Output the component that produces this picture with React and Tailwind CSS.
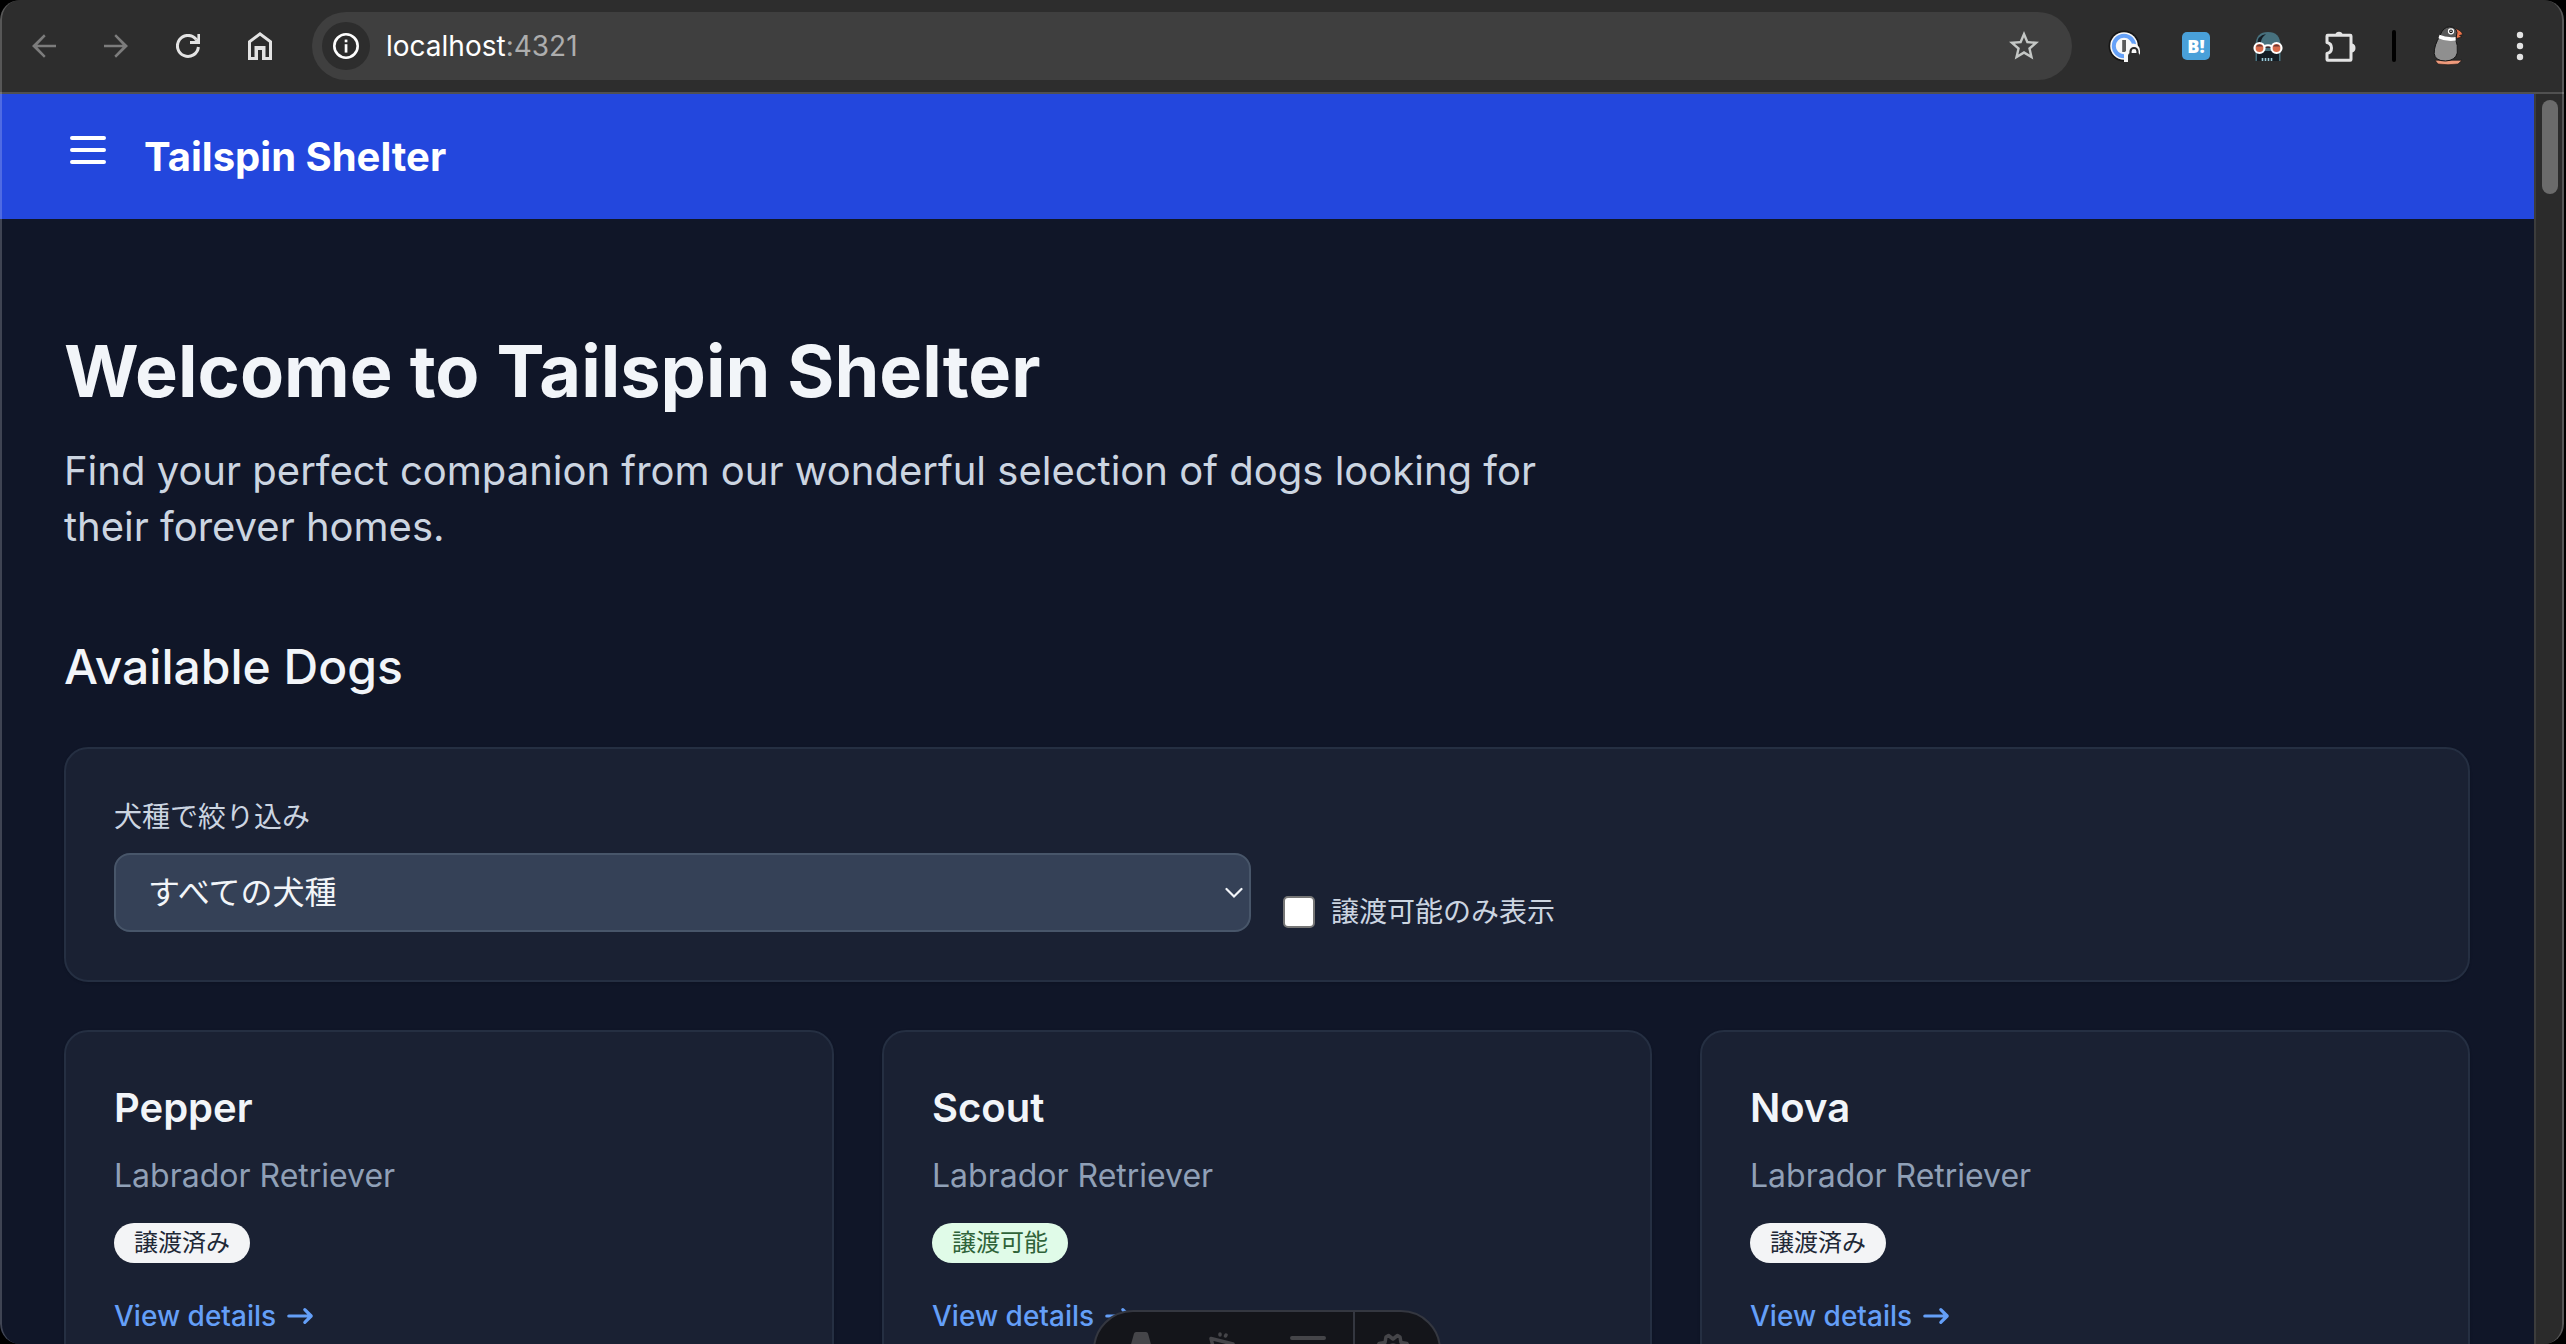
import React from "react";

const dogs = [
  { name: "Pepper", breed: "Labrador Retriever", available: false },
  { name: "Scout", breed: "Labrador Retriever", available: true },
  { name: "Nova", breed: "Labrador Retriever", available: false },
];

function BarButton({ label, children }) {
  return (
    <button type="button" aria-label={label} className="flex size-12 shrink-0 items-center justify-center rounded-full">
      {children}
    </button>
  );
}

function BackIcon({ className }) {
  return (
    <svg viewBox="0 0 16 16" className={className} fill="currentColor" aria-hidden="true">
      <path d="M16 7.1H3.6l5.5-5.6L8 0.2 0 8l8 7.8 1.1-1.2L3.6 8.9H16z" />
    </svg>
  );
}

function ReloadIcon() {
  return (
    <svg viewBox="0 0 24 24" className="size-6 text-[#e3e3e3]" fill="none" aria-hidden="true">
      <path d="M22.4 13A10.5 10.5 0 1 1 20.2 5.4" stroke="currentColor" strokeWidth="3" />
      <path d="M21.4 0H24v10H14V7h4.2l3.2-2.4z" fill="currentColor" />
    </svg>
  );
}

function HomeIcon() {
  return (
    <svg viewBox="0 0 24 28" className="h-7 w-6 text-[#e3e3e3]" aria-hidden="true">
      <path
        fill="currentColor"
        fillRule="evenodd"
        d="M0 9 12 0l12 9v19H14V18h-4v10H0zM3 10.5V25h3.5V14h11v11H21V10.5L12 3.8z"
      />
    </svg>
  );
}

function InfoIcon() {
  return (
    <svg viewBox="0 0 26 26" className="size-[26px] text-white" fill="none" aria-hidden="true">
      <circle cx="13" cy="13" r="11.7" stroke="currentColor" strokeWidth="2.6" />
      <rect x="11.7" y="6.6" width="2.7" height="2.7" fill="currentColor" />
      <rect x="11.7" y="11.2" width="2.7" height="8.4" fill="currentColor" />
    </svg>
  );
}

function StarIcon() {
  return (
    <svg viewBox="0 0 24 24" className="size-9 text-[#c4c7c5]" fill="currentColor" aria-hidden="true">
      <path d="M22 9.24l-7.19-.62L12 2 9.19 8.63 2 9.24l5.46 4.73L5.82 21 12 17.27 18.18 21l-1.63-7.03L22 9.24zM12 15.4l-3.76 2.27 1-4.28-3.32-2.88 4.38-.38L12 6.1l1.71 4.04 4.38.38-3.32 2.88 1 4.28L12 15.4z" />
    </svg>
  );
}

function PasswordIcon() {
  return (
    <svg viewBox="0 0 32 32" className="size-8" aria-hidden="true">
      <circle cx="16" cy="16" r="15.5" fill="#161616" />
      <circle cx="16" cy="16" r="13.8" fill="#f8f8f8" />
      <circle cx="16" cy="16" r="10.2" fill="none" stroke="#65a1f8" strokeWidth="4" />
      <rect x="14.2" y="10" width="3.8" height="12" fill="#5a5a5a" />
      <path d="M16 32V24q0-2 2-3 1-6 7-7.5 7 1 7 7.5v11z" fill="#f8f8f8" />
      <path d="M20 32v-6q0-3 3-3h6q3 0 3 3v6z" fill="#2d2d2d" />
      <path d="M22.5 24v-2.5a3.500 3.500 0 0 1 7 0V24" fill="none" stroke="#2d2d2d" strokeWidth="2.2" />
    </svg>
  );
}

function SkullIcon() {
  return (
    <svg viewBox="0 0 30 30" className="size-[30px]" aria-hidden="true">
      <path d="M2.5 30V14Q3 1 15 1t12.5 13v16z" fill="#47717e" />
      <path d="M4 15Q4 4 13 3 7 8 8 13zM4 20h22v10H4z" fill="#141d25" />
      <path d="M4 14h22v3H4z" fill="#3a2a2c" />
      <path d="M9.5 27v3M12.5 27v3M15.5 27v3M18.5 27v3" stroke="#9cc9d6" strokeWidth="1.6" />
      <path d="M11 15.5q4-2.5 8 0" fill="none" stroke="#fff" strokeWidth="2" />
      <circle cx="6.5" cy="17" r="5" fill="#d86b4b" stroke="#fff" strokeWidth="2.2" />
      <circle cx="23.5" cy="17" r="5" fill="#d86b4b" stroke="#fff" strokeWidth="2.2" />
      <path d="M3 15.5a4 4 0 0 1 7 0zM20 15.5a4 4 0 0 1 7 0z" fill="#6a3a36" />
    </svg>
  );
}

function PuzzleIcon() {
  return (
    <svg viewBox="0 0 32 36" className="h-9 w-8 text-[#e3e3e3]" aria-hidden="true">
      <path
        d="M3.7 7.300h22.600q.7 0 .7.700v23.500q0 .7-.7.700H3.700q-.7 0-.7-.7V25.500q4.500-1 4.500-5.500T3 14.500V8q0-.7.7-.7z"
        fill="none"
        stroke="currentColor"
        strokeWidth="3"
        strokeLinejoin="round"
      />
      <path d="M11 7a4.200 4.800 0 0 1 8 0zM28 15.500a4.400 4.600 0 0 1 0 9z" fill="currentColor" />
    </svg>
  );
}

function BirdIcon() {
  return (
    <svg viewBox="0 0 32 40" className="h-10 w-8" aria-hidden="true">
      <path d="M3 34.300h27l-4 3.700Q16 39.500 6 38z" fill="#ef9a7b" stroke="#111" strokeWidth=".6" />
      <path d="M8 10Q2 19 2.200 27.500 3 35 13.500 35q10-.5 11.800-8 1-7-2.300-16z" fill="#8f8f8f" stroke="#151515" strokeWidth="1" />
      <path d="M23 2.500q6 1.500 7.800 6l-3.300 1 2.500 1.500-5.500 1.500q-2-4-1.500-10z" fill="#e9744c" stroke="#151515" strokeWidth=".7" />
      <path d="M8 9.500Q11 1 17.500.8 24 1 25 6.500L24 12q-9 1.500-16-2.500z" fill="#595959" stroke="#151515" strokeWidth="1" />
      <path d="M7.600 8.800q7 3.200 16 2.200l.2 3.600q-9 1.600-17.400-2.400z" fill="#fff" />
      <circle cx="19" cy="5.300" r="2.500" fill="#111" stroke="#fff" strokeWidth="1.300" />
      <circle cx="19" cy="5.300" r=".8" fill="#fff" />
    </svg>
  );
}

function DotsIcon() {
  return (
    <svg viewBox="0 0 8 32" className="h-8 w-2 text-[#e3e3e3]" fill="currentColor" aria-hidden="true">
      <circle cx="4" cy="5" r="3.2" />
      <circle cx="4" cy="16" r="3.2" />
      <circle cx="4" cy="27" r="3.2" />
    </svg>
  );
}

function BrowserBar() {
  return (
    <div className="flex shrink-0 items-center border-b-2 border-[#505050] bg-[#2d2d2d] py-3 pr-5 pl-5">
      <div className="flex gap-6">
        <BarButton label="Back">
          <BackIcon className="size-6 text-[#7c7c7c]" />
        </BarButton>
        <BarButton label="Forward">
          <BackIcon className="size-6 rotate-180 text-[#7c7c7c]" />
        </BarButton>
        <BarButton label="Reload">
          <ReloadIcon />
        </BarButton>
        <BarButton label="Home">
          <HomeIcon />
        </BarButton>
      </div>
      <div className="mx-7 flex h-[68px] min-w-0 flex-1 items-center rounded-full bg-[#3f3f3f] pr-6 pl-[10px]">
        <button type="button" aria-label="Site information" className="flex size-12 shrink-0 items-center justify-center rounded-full bg-[#2d2d2d]">
          <InfoIcon />
        </button>
        <div className="ml-4 flex-1 font-['Inter',sans-serif] text-[28px] leading-10 text-white">
          localhost<span className="text-[#adadad]">:4321</span>
        </div>
        <BarButton label="Bookmark this tab">
          <StarIcon />
        </BarButton>
      </div>
      <div className="flex items-center gap-6">
        <BarButton label="Password manager">
          <PasswordIcon />
        </BarButton>
        <BarButton label="Bookmark service">
          <span className="flex size-7 items-center justify-center rounded-[5px] bg-[#49a0d9] font-['Open_Sans',sans-serif] text-[18px] leading-7 font-extrabold text-white">
            B!
          </span>
        </BarButton>
        <BarButton label="Reader extension">
          <SkullIcon />
        </BarButton>
        <BarButton label="Extensions">
          <PuzzleIcon />
        </BarButton>
      </div>
      <div className="mx-7 h-8 w-1 rounded-full bg-black" />
      <div className="flex items-center gap-6">
        <BarButton label="Profile">
          <BirdIcon />
        </BarButton>
        <BarButton label="Menu">
          <DotsIcon />
        </BarButton>
      </div>
    </div>
  );
}

function SiteHeader() {
  return (
    <header className="flex items-start gap-8 bg-[#2347dd] px-16 pt-8 pb-8">
      <button type="button" aria-label="Toggle menu" className="pb-[13px] text-white">
        <svg viewBox="0 0 24 24" className="block size-12" fill="none" stroke="currentColor" strokeWidth="2" strokeLinecap="round" aria-hidden="true">
          <path d="M4 6h16M4 12h16M4 18h16" />
        </svg>
      </button>
      <a href="#home" className="self-center text-[40px] leading-[56px] font-bold text-white">
        Tailspin Shelter
      </a>
    </header>
  );
}

function Filters() {
  return (
    <form className="grid grid-cols-2 items-end gap-8 rounded-3xl border-2 border-[#252f42] bg-[#1a2133] p-12 shadow-sm">
      <div className="flex flex-col gap-4">
        <label htmlFor="breed" className="text-[28px] leading-10 text-[#ccd5e1]">
          犬種で絞り込み
        </label>
        <div className="relative">
          <select
            id="breed"
            className="block h-[79px] w-full appearance-none rounded-2xl border-2 border-[#48566a] bg-[#354157] px-8 text-[32px] text-[#f2f5f9]"
          >
            <option>すべての犬種</option>
          </select>
          <svg viewBox="0 0 18 12" className="pointer-events-none absolute top-1/2 right-2 h-3 w-[18px] -translate-y-1/2 text-[#f2f5f9]" fill="none" aria-hidden="true">
            <path d="M1.5 2 9 9.5 16.5 2" stroke="currentColor" strokeWidth="2.2" strokeLinecap="round" />
          </svg>
        </div>
      </div>
      <label className="flex items-center gap-4 text-[28px] leading-10 text-[#ccd5e1]">
        <input type="checkbox" className="size-8 appearance-none rounded-[5px] border-2 border-[#767676] bg-white" />
        譲渡可能のみ表示
      </label>
    </form>
  );
}

function DogCard({ dog }) {
  return (
    <li className="rounded-3xl border-2 border-[#252f42] bg-[#1a2133] p-12 shadow-sm">
      <h3 className="text-[40px] leading-[56px] font-semibold text-[#f2f5f9]">{dog.name}</h3>
      <p className="mt-4 text-[32px] leading-[48px] text-[#90a0b7]">{dog.breed}</p>
      <p className="mt-[23px] flex">
        <span
          className={
            dog.available
              ? "rounded-full bg-[#e0fbe8] px-5 py-1 text-[24px] leading-8 text-[#2f6339]"
              : "rounded-full bg-[#f3f4f6] px-5 py-1 text-[24px] leading-8 text-[#212836]"
          }
        >
          {dog.available ? "譲渡可能" : "譲渡済み"}
        </span>
      </p>
      <a href="#details" className="mt-[33px] flex items-center gap-2 text-[28px] leading-10 font-medium text-[#649ff8]">
        View details
        <svg viewBox="0 0 20 20" className="size-8" fill="currentColor" aria-hidden="true">
          <path d="M12.293 5.293a1 1 0 011.414 0l4 4a1 1 0 010 1.414l-4 4a1 1 0 01-1.414-1.414L14.586 11H3a1 1 0 110-2h11.586l-2.293-2.293a1 1 0 010-1.414z" />
        </svg>
      </a>
    </li>
  );
}

function DevToolbar() {
  return (
    <div className="absolute -bottom-[46px] left-1/2 flex h-20 w-[348px] -translate-x-1/2 items-start overflow-hidden rounded-full border-2 border-[#343740] bg-[#14151a] text-[#454549]">
      <button type="button" aria-label="Astro menu" className="flex w-[92px] justify-center pt-5">
        <svg viewBox="0 0 36 40" className="h-10 w-9" fill="currentColor" aria-hidden="true">
          <path d="M13 0h10q1.500 0 2 1.500L34 34l-11-3-4.200-17q-.8-2-1.600 0L13 31 2 34 11 1.500Q11.500 0 13 0z" />
        </svg>
      </button>
      <button type="button" aria-label="Inspect" className="flex w-[68px] justify-center pt-5">
        <svg viewBox="0 0 32 32" className="size-8" fill="none" stroke="currentColor" strokeWidth="3.5" strokeLinecap="round" strokeLinejoin="round" aria-hidden="true">
          <path d="M28 12 6 6.500 12 30M15 2v1M21 3l-.5 1" />
        </svg>
      </button>
      <button type="button" aria-label="Audit" className="flex flex-1 justify-center pt-5 pl-2">
        <svg viewBox="0 0 38 32" className="h-8 w-[38px]" fill="none" stroke="currentColor" strokeWidth="4" strokeLinecap="round" aria-hidden="true">
          <path d="M3 6h32M3 18h32" />
        </svg>
      </button>
      <button type="button" aria-label="Settings" className="flex w-[86px] self-stretch border-l-2 border-[#343740] pt-5 pl-5">
        <svg viewBox="0 0 36 36" className="size-9" fill="none" stroke="currentColor" strokeWidth="3.5" strokeLinejoin="round" aria-hidden="true">
          <path d="M13.5 3.500 18 7l4.500-3.500L25 5l1 5.500 6 1 1 3-3.500 4.500L33 24l-1 3-6 1-1 5H11l-1-5-6-1-1-3 3.500-5L3 14.500l1-3 6-1L11 5z" />
          <circle cx="18" cy="18" r="5" />
        </svg>
      </button>
    </div>
  );
}

export default function App() {
  return (
    <div className="h-screen bg-black pr-[2px] font-['Inter','Noto_Sans_CJK_JP',sans-serif]">
      <div className="relative flex h-full flex-col overflow-hidden rounded-[20px]">
        <BrowserBar />
        <div className="flex min-h-0 flex-1">
          <div className="relative min-w-0 flex-1 overflow-hidden bg-[#101628]">
            <SiteHeader />
            <main className="px-16 pt-28">
              <h1 className="text-[72px] leading-[80px] font-bold text-[#f2f5f9]">Welcome to Tailspin Shelter</h1>
              <p className="mt-8 max-w-[1536px] text-[40px] leading-[56px] text-[#ccd5e1]">
                Find your perfect companion from our wonderful selection of dogs looking for their forever homes.
              </p>
              <h2 className="mt-20 mb-12 text-[48px] leading-[64px] font-medium text-[#f2f5f9]">Available Dogs</h2>
              <Filters />
              <ul className="mt-12 grid grid-cols-3 gap-12">
                {dogs.map((dog) => (
                  <DogCard key={dog.name} dog={dog} />
                ))}
              </ul>
            </main>
            <DevToolbar />
          </div>
          <div className="w-[30px] shrink-0 border-l-2 border-[#3c3c3c] bg-[#2b2b2b] pt-[6px] pl-[6px]">
            <div className="h-[94px] w-4 rounded-full bg-[#6b6b6b]" />
          </div>
        </div>
        <div className="pointer-events-none absolute inset-0 rounded-[20px] border-x-2 border-white/20" />
      </div>
    </div>
  );
}
